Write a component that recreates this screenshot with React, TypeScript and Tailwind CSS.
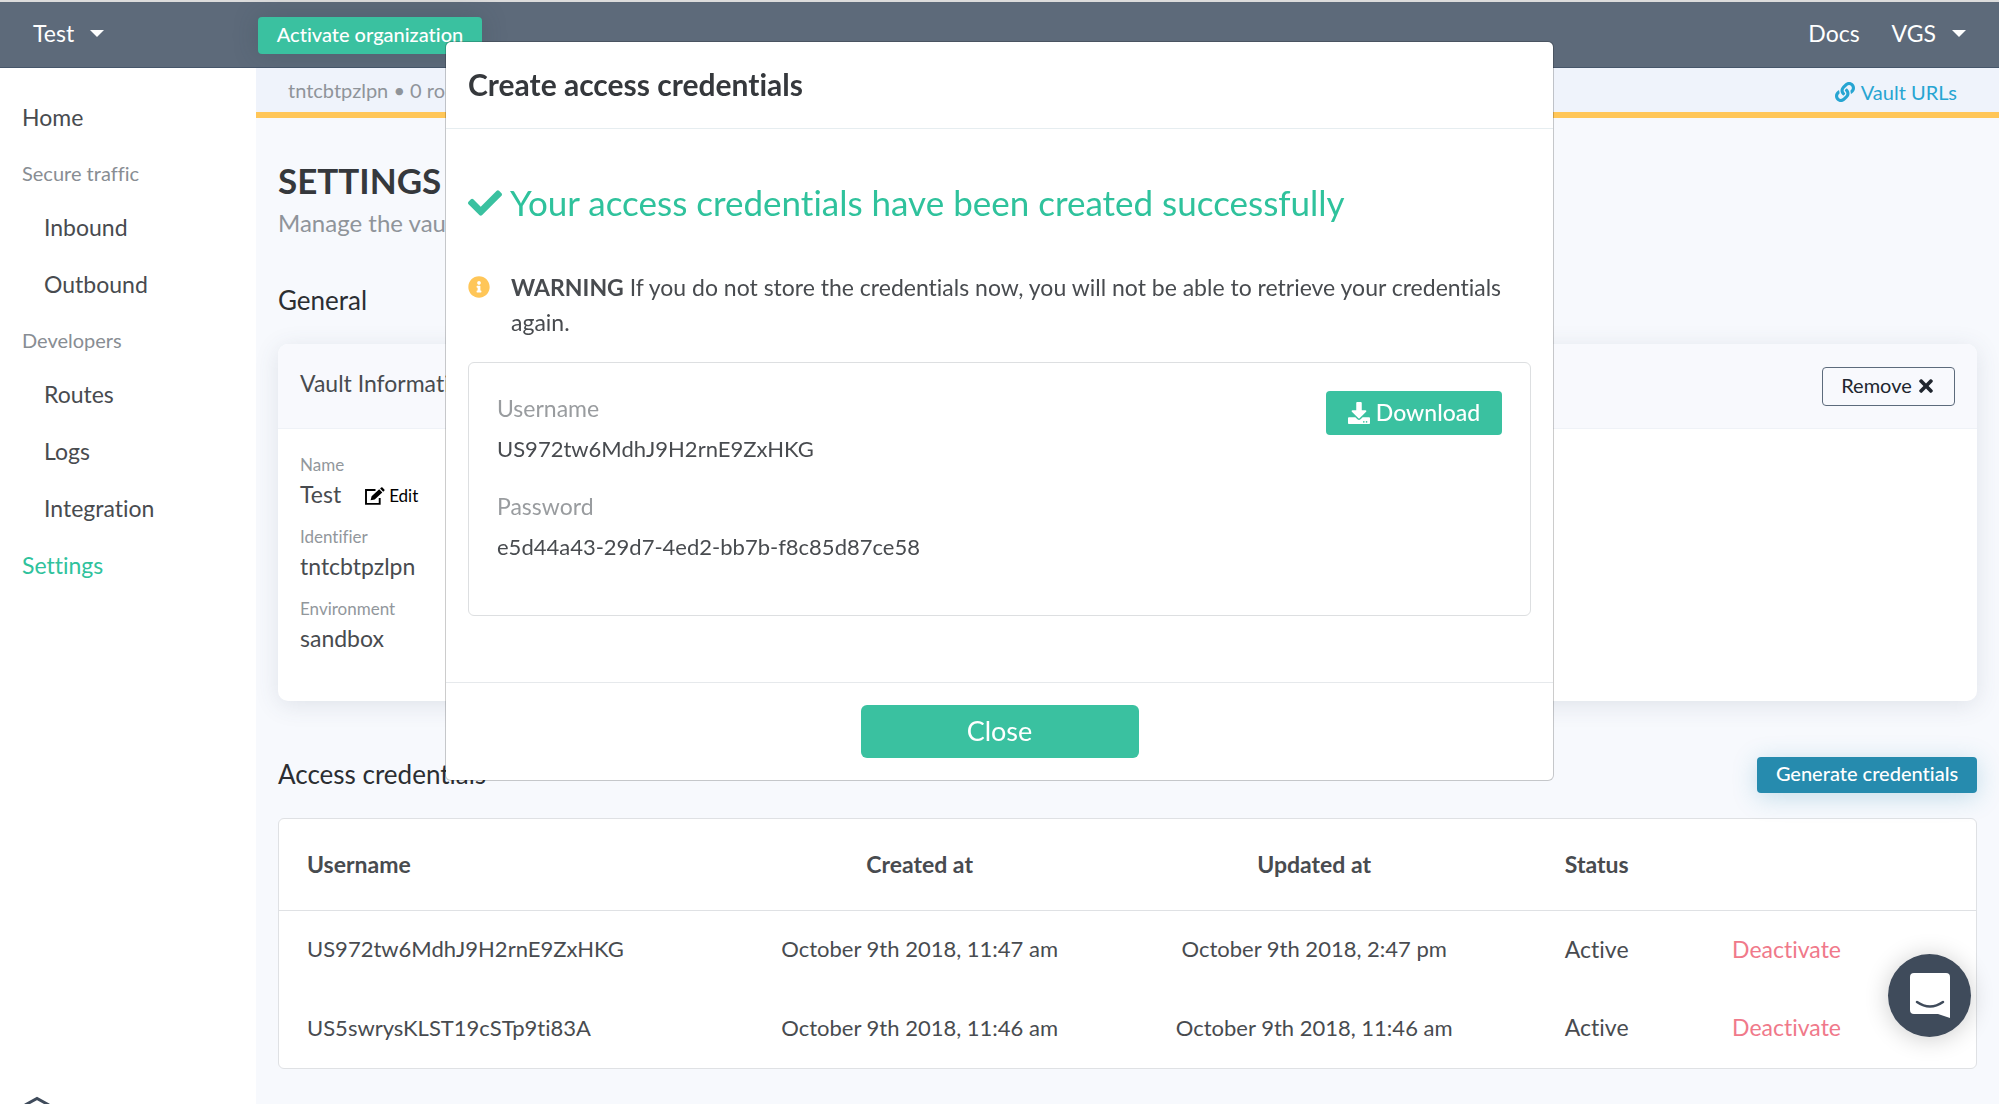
import React from "react";
import { FaCheck, FaDownload, FaInfoCircle, FaLink, FaTimes } from "react-icons/fa";

type NavEntry = { label: string; kind: "item" | "group" | "child"; active?: boolean };

const NAV: NavEntry[] = [
  { label: "Home", kind: "item" },
  { label: "Secure traffic", kind: "group" },
  { label: "Inbound", kind: "child" },
  { label: "Outbound", kind: "child" },
  { label: "Developers", kind: "group" },
  { label: "Routes", kind: "child" },
  { label: "Logs", kind: "child" },
  { label: "Integration", kind: "child" },
  { label: "Settings", kind: "item", active: true },
];

const CREDENTIALS = [
  { user: "US972tw6MdhJ9H2rnE9ZxHKG", created: "October 9th 2018, 11:47 am", updated: "October 9th 2018, 2:47 pm" },
  { user: "US5swrysKLST19cSTp9ti83A", created: "October 9th 2018, 11:46 am", updated: "October 9th 2018, 11:46 am" },
];

function Caret() {
  return (
    <svg width="14" height="7" viewBox="0 0 14 7" fill="currentColor" aria-hidden="true">
      <path d="M0 0h14L7 7z" />
    </svg>
  );
}

function EditIcon() {
  return (
    <svg width="20" height="18" viewBox="0 0 20 18" aria-hidden="true">
      <path d="M10.5 3H1v13.9h13.7V11" fill="none" stroke="currentColor" strokeWidth="1.9" />
      <path d="M5.6 13.3l1-4.1 7.6-7 3.1 3.3-7.6 7zM15.1 1.4l1-.9a1 1 0 0 1 1.4 0l1.8 1.9a1 1 0 0 1 0 1.4l-1.1.9z" fill="currentColor" />
    </svg>
  );
}

function TopBar() {
  return (
    <header className="flex h-17 items-center border-t-2 border-b border-t-[#dcdcdc] border-b-[#46566a] bg-[#5d6a7a] pr-[33px] pb-0.5 text-[23px] text-white">
      <div className="w-[258px] shrink-0 pl-[33px]">
        <button type="button" className="flex items-center gap-4">
          Test <Caret />
        </button>
      </div>
      <button type="button" className="mt-1 h-[37px] w-56 rounded bg-[#3ac1a0] pb-1 text-[20px] leading-8 font-medium shadow-[0_0_24px_rgba(40,70,80,0.25)]">
        Activate organization
      </button>
      <nav className="ml-auto flex items-center gap-8">
        <a href="#docs">Docs</a>
        <button type="button" className="flex items-center gap-4">
          VGS <Caret />
        </button>
      </nav>
    </header>
  );
}

function Sidebar() {
  return (
    <aside className="flex w-64 shrink-0 flex-col bg-white pt-[21px]">
      <nav>
        <ul>
          {NAV.map((n) =>
            n.kind === "group" ? (
              <li key={n.label} className="flex h-[53px] items-center pl-[22px] text-[20px] text-[#888d93]">
                {n.label}
              </li>
            ) : (
              <li key={n.label}>
                <a
                  href={`#${n.label.toLowerCase()}`}
                  className={`flex h-[57px] items-center text-[23px] ${n.kind === "child" ? "pl-11" : "pl-[22px]"} ${
                    n.active ? "text-[#2fc29c]" : "text-[#484b4f]"
                  }`}
                >
                  {n.label}
                </a>
              </li>
            ),
          )}
        </ul>
      </nav>
      <svg className="mt-auto ml-6 h-2 w-7 overflow-hidden" viewBox="0 0 28 8" fill="none" stroke="#3f4b5b" strokeWidth="3" aria-hidden="true">
        <path d="M1 9 13 2.5 25 9" />
      </svg>
    </aside>
  );
}

function Field({ label, children }: { label: string; children: React.ReactNode }) {
  return (
    <div>
      <dt className="text-[17px] leading-6 text-[#92979c]">{label}</dt>
      <dd className="mb-[14px] flex h-[34px] items-center text-[23px] text-[#484b4f]">{children}</dd>
    </div>
  );
}

function VaultCard() {
  return (
    <section className="rounded-[10px] bg-white shadow-[0_4px_24px_rgba(60,80,100,0.13)]">
      <div className="flex h-[85px] items-center justify-between rounded-t-[10px] border-b border-[#eff2f7] bg-[#f8f9fd] px-[22px]">
        <h3 className="mb-1.5 text-[23px] text-[#484b4f]">Vault Information</h3>
        <button type="button" className="flex h-[39px] w-[133px] items-center justify-center gap-1 rounded border border-[#5d6b7c] pb-0.5 text-[20px] text-[#20262f]">
          Remove <FaTimes size={20} className="mt-0.5" />
        </button>
      </div>
      <dl className="px-[22px] pt-6 pb-8">
        <Field label="Name">
          Test
          <button type="button" className="mt-1 ml-6 flex items-center gap-1 text-[17px] text-black">
            <EditIcon /> Edit
          </button>
        </Field>
        <Field label="Identifier">tntcbtpzlpn</Field>
        <Field label="Environment">sandbox</Field>
      </dl>
    </section>
  );
}

function CredentialsTable() {
  return (
    <div className="rounded-md border border-[#dfe1e4] bg-white">
      <table className="w-full table-fixed text-[22px] text-[#484b4f]">
        <colgroup>
          <col className="w-[26%]" />
          <col className="w-[23.5%]" />
          <col className="w-[23%]" />
          <col className="w-[10.3%]" />
          <col />
        </colgroup>
        <thead>
          <tr className="h-[91px] border-b border-[#dfe1e4] text-[23px]">
            <th scope="col" className="pl-7 text-left font-bold">Username</th>
            <th scope="col" className="font-bold">Created at</th>
            <th scope="col" className="font-bold">Updated at</th>
            <th scope="col" className="font-bold">Status</th>
            <td />
          </tr>
        </thead>
        <tbody>
          {CREDENTIALS.map((c) => (
            <tr key={c.user} className="h-[79px]">
              <td className="pb-0.5 pl-7">{c.user}</td>
              <td className="pb-0.5 text-center">{c.created}</td>
              <td className="pb-0.5 text-center">{c.updated}</td>
              <td className="pb-0.5 text-center text-[23px]">Active</td>
              <td className="pb-0.5 pl-12 text-[23px]">
                <button type="button" className="text-[#f0798a]">Deactivate</button>
              </td>
            </tr>
          ))}
        </tbody>
      </table>
    </div>
  );
}

function Modal() {
  return (
    <div className="fixed inset-x-0 top-[41px] flex justify-center">
      <div role="dialog" aria-modal="true" aria-labelledby="dialog-title" className="w-[1109px] max-w-full rounded-md border border-black/20 bg-white bg-clip-padding">
        <div className="flex h-[87px] items-center border-b border-[#e6edf0] px-[22px] pb-0.5">
          <h2 id="dialog-title" className="text-[30px] font-bold text-[#35383c]">Create access credentials</h2>
        </div>
        <div className="px-[22px] pt-[47px]">
          <p className="flex h-[53px] items-center gap-2 text-[35px] text-[#2fc29c]">
            <FaCheck size={34} className="text-[#3ac1a0]" />
            Your access credentials have been created successfully
          </p>
          <div className="mt-[41px] flex gap-[21px] pr-6">
            <FaInfoCircle size={22} className="mt-[6px] shrink-0 text-[#ffc658]" />
            <p className="text-[23px] leading-[35px] text-[#484b4f]">
              <strong>WARNING</strong> If you do not store the credentials now, you will not be able to retrieve your credentials again.
            </p>
          </div>
          <div className="mt-[22px] flex items-start justify-between rounded-md border border-[#dddfe1] px-7 pt-7 pb-[48px]">
            <dl className="text-[22px] leading-10 text-[#484b4f]">
              <dt className="text-[23px] leading-[34px] text-[#999c9f]">Username</dt>
              <dd className="mt-1">US972tw6MdhJ9H2rnE9ZxHKG</dd>
              <dt className="mt-5 text-[23px] leading-[34px] text-[#999c9f]">Password</dt>
              <dd className="mt-1">e5d44a43-29d7-4ed2-bb7b-f8c85d87ce58</dd>
            </dl>
            <button type="button" className="flex h-11 w-44 items-center justify-center gap-[6px] rounded bg-[#3ac1a0] text-[23px] font-medium text-white">
              <FaDownload size={22} /> <span className="pb-0.5">Download</span>
            </button>
          </div>
        </div>
        <div className="mt-[66px] flex h-[98px] items-center justify-center border-t border-[#e6e9ec]">
          <button type="button" className="h-[53px] w-[278px] rounded-md bg-[#3ac1a0] text-[27px] text-white">Close</button>
        </div>
      </div>
    </div>
  );
}

export default function App() {
  return (
    <div className="flex h-screen min-h-[600px] flex-col overflow-hidden bg-[#f7f9fd] font-['Lato',sans-serif] [font-variant-ligatures:none]">
      <TopBar />
      <div className="flex min-h-0 flex-1">
        <Sidebar />
        <main className="min-w-0 flex-1">
          <div className="flex h-[50px] items-center justify-between border-b-6 border-[#ffc658] bg-[#eff3fb] pr-[42px] pl-8 text-[20px]">
            <span className="text-[#8f949a]">tntcbtpzlpn • 0 routes</span>
            <a href="#vault-urls" className="mt-1 flex items-center gap-[6px] text-[#27a5d2]">
              <FaLink size={20} /> Vault URLs
            </a>
          </div>
          <div className="px-[22px] pt-[39px]">
            <h1 className="text-[35px] leading-[46px] font-bold text-[#35383c]">SETTINGS</h1>
            <p className="text-[24px] leading-10 text-[#8f949a]">Manage the vault settings</p>
            <h2 className="mt-[37px] mb-6 text-[26px] leading-10 text-[#2b2e32]">General</h2>
            <VaultCard />
            <div className="mt-[56px] mb-[25px] flex h-9 items-center justify-between">
              <h2 className="pb-0.5 text-[26px] text-[#2b2e32]">Access credentials</h2>
              <button type="button" className="h-9 w-[220px] rounded bg-[#268bae] pb-1 text-[20px] leading-8 font-medium text-white shadow-[0_4px_24px_rgba(38,139,174,0.25)]">
                Generate credentials
              </button>
            </div>
            <CredentialsTable />
          </div>
        </main>
      </div>
      <Modal />
      <button type="button" aria-label="Open chat" className="fixed right-[28px] bottom-[67px] flex size-[83px] items-center justify-center rounded-full bg-[#3f4b5b] shadow-[0_2px_24px_rgba(0,0,0,0.2)]">
        <svg width="40" height="46" viewBox="0 0 40 46" aria-hidden="true">
          <path d="M4 0h32a4 4 0 0 1 4 4v41l-12-4H4a4 4 0 0 1-4-4V4a4 4 0 0 1 4-4z" fill="#fff" />
          <path d="M7 29q13 9 26 0" fill="none" stroke="#3f4b5b" strokeWidth="2.5" strokeLinecap="round" />
        </svg>
      </button>
    </div>
  );
}
